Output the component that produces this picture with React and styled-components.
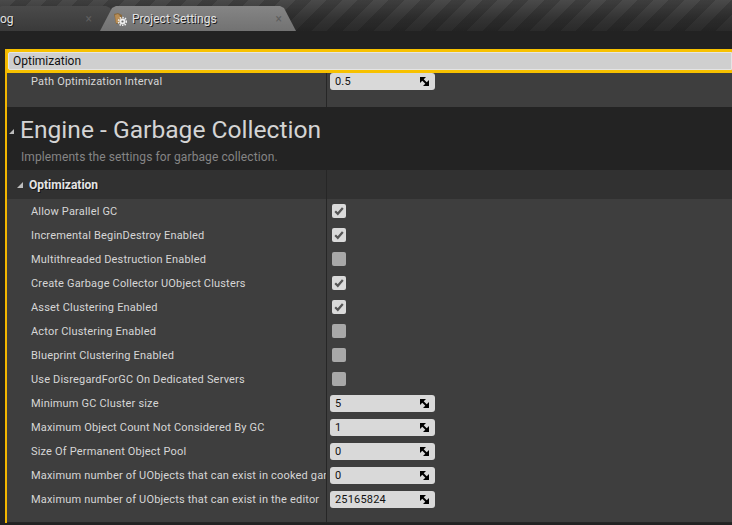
import React from "react";
import styled, { createGlobalStyle } from "styled-components";

const GlobalStyle = createGlobalStyle`
  html, body {
    margin: 0;
    padding: 0;
    background: #222222;
  }
  * {
    box-sizing: border-box;
  }
`;

// rows of the garbage collection category
const rows = [
  { name: "Allow Parallel GC", type: "bool", value: true },
  { name: "Incremental BeginDestroy Enabled", type: "bool", value: true },
  { name: "Multithreaded Destruction Enabled", type: "bool", value: false },
  { name: "Create Garbage Collector UObject Clusters", type: "bool", value: true },
  { name: "Asset Clustering Enabled", type: "bool", value: true },
  { name: "Actor Clustering Enabled", type: "bool", value: false },
  { name: "Blueprint Clustering Enabled", type: "bool", value: false },
  { name: "Use DisregardForGC On Dedicated Servers", type: "bool", value: false },
  { name: "Minimum GC Cluster size", type: "num", value: "5" },
  { name: "Maximum Object Count Not Considered By GC", type: "num", value: "1" },
  { name: "Size Of Permanent Object Pool", type: "num", value: "0" },
  { name: "Maximum number of UObjects that can exist in cooked game", type: "num", value: "0" },
  { name: "Maximum number of UObjects that can exist in the editor", type: "num", value: "25165824" },
];

const ResizeIcon = () => (
  <svg width="9" height="9" viewBox="0 0 9 9">
    <polygon points="0,0 6,0 0,6" fill="#000" />
    <polygon points="9,9 9,3 3,9" fill="#000" />
    <line x1="1" y1="1" x2="8" y2="8" stroke="#000" strokeWidth="2" />
  </svg>
);

const CheckIcon = () => (
  <svg width="10" height="10" viewBox="0 0 10 10">
    <path d="M1.2 5.2 L3.8 7.8 L8.8 2" fill="none" stroke="#555" strokeWidth="2.2" />
  </svg>
);

const SettingsIcon = () => (
  <svg width="14" height="14" viewBox="0 0 14 14">
    <path d="M1 2 L5 1 L9 3 L9 11 L3 12 Z" fill="#8a6a3e" />
    <path d="M2 3 L5 2 L7 4 L7 10 L3 11 Z" fill="#b88d55" />
    <circle cx="9.5" cy="9.5" r="3" fill="#eee" />
    <circle cx="9.5" cy="9.5" r="4" fill="none" stroke="#eee" strokeWidth="1.6" strokeDasharray="1.4 1.2" />
    <circle cx="9.5" cy="9.5" r="1.1" fill="#6a6a6a" />
  </svg>
);

const TriangleDown = ({ size }) => (
  <svg width={size} height={size} viewBox="0 0 6 6">
    <polygon points="6,0 6,6 0,6" fill="#bdbdbd" />
  </svg>
);

export default function App() {
  return (
    <>
      <GlobalStyle />
      <Screen>
        <TabBar>
          <LogTab>
            <TabLabel>og</TabLabel>
            <TabClose>×</TabClose>
          </LogTab>
          <ActiveTab>
            <SettingsIcon />
            <TabLabel>Project Settings</TabLabel>
            <TabClose>×</TabClose>
          </ActiveTab>
        </TabBar>

        <Body>
          <Panel>
            <SearchFrame>
              <SearchBox>Optimization</SearchBox>
            </SearchFrame>

            <PropertyRow $tall>
              <NameCell $tall>Path Optimization Interval</NameCell>
              <ValueCell $tall>
                <NumberBox>
                  <span>0.5</span>
                  <ResizeIcon />
                </NumberBox>
              </ValueCell>
            </PropertyRow>

            <SectionHeader>
              <SectionTitle>
                <TriangleDown size={5} />
                <span>Engine - Garbage Collection</span>
              </SectionTitle>
              <SectionDesc>Implements the settings for garbage collection.</SectionDesc>
            </SectionHeader>

            <CategoryRow>
              <CategoryName>
                <TriangleDown size={6} />
                <span>Optimization</span>
              </CategoryName>
              <ValueCell />
            </CategoryRow>

            {rows.map((row) => (
              <PropertyRow key={row.name}>
                <NameCell>{row.name}</NameCell>
                <ValueCell>
                  {row.type === "bool" ? (
                    <CheckBox $checked={row.value}>{row.value && <CheckIcon />}</CheckBox>
                  ) : (
                    <NumberBox>
                      <span>{row.value}</span>
                      <ResizeIcon />
                    </NumberBox>
                  )}
                </ValueCell>
              </PropertyRow>
            ))}
            <PanelFoot>
              <span />
              <ValueCell />
            </PanelFoot>
          </Panel>
        </Body>
      </Screen>
    </>
  );
}

const Screen = styled.div`
  width: 732px;
  height: 525px;
  overflow: hidden;
  background: #222222;
  font-family: Roboto, "Liberation Sans", sans-serif;
  display: flex;
  flex-direction: column;
`;

const TabBar = styled.div`
  height: 31px;
  flex-shrink: 0;
  display: flex;
  align-items: flex-end;
  background:
    repeating-linear-gradient(135deg, rgba(0, 0, 0, 0) 0 11px, rgba(0, 0, 0, 0.16) 11px 22px),
    linear-gradient(180deg, #4a4a4a 0%, #333333 60%, #2a2a2a 100%);
`;

const Tab = styled.div`
  height: 25px;
  flex-shrink: 0;
  display: flex;
  align-items: center;
  clip-path: polygon(0 100%, 12px 2px, 16px 0, calc(100% - 16px) 0, calc(100% - 12px) 2px, 100% 100%);
`;

const LogTab = styled(Tab)`
  width: 136px;
  margin-left: -14px;
  padding: 0 30px 0 14px;
  justify-content: space-between;
  background: linear-gradient(180deg, #4a4a4a, #3a3a3a);
`;

const ActiveTab = styled(Tab)`
  width: 196px;
  margin-left: -22px;
  padding: 0 14px 0 13px;
  gap: 5px;
  background: linear-gradient(180deg, #858585, #727272);
  z-index: 1;

  svg {
    flex-shrink: 0;
    margin-top: 1px;
  }
  > span:nth-of-type(1) {
    flex: 1;
  }
`;

const TabLabel = styled.span`
  font-size: 12px;
  color: #e2e2e2;
  text-shadow: 1px 1px 0 #1a1a1a;
  white-space: nowrap;
`;

const TabClose = styled.span`
  font-size: 12px;
  color: #5e5e5e;
`;

const Body = styled.div`
  flex: 1;
  padding: 18px 0 2px 5px;
  display: flex;
  min-height: 0;
`;

const Panel = styled.div`
  flex: 1;
  border-left: 2px solid #f2b600;
  background: #3e3e3e;
  display: flex;
  flex-direction: column;
  overflow: hidden;
`;

const SearchFrame = styled.div`
  background: #f7c100;
  padding: 3px 0 3px 1px;
`;

const SearchBox = styled.div`
  height: 18px;
  background: #cfcfcf;
  border: 1px solid #e4e4e4;
  border-radius: 2px 0 0 2px;
  padding-left: 4px;
  font-size: 12px;
  line-height: 16px;
  color: #111;
`;

const PropertyRow = styled.div`
  display: grid;
  grid-template-columns: 319px 1fr;
  height: ${(p) => (p.$tall ? "34px" : "24px")};
  background: #3e3e3e;
`;

const NameCell = styled.div`
  padding-left: 24px;
  padding-right: 2px;
  font-size: 11px;
  letter-spacing: 0.18px;
  color: #d6d6d6;
  white-space: nowrap;
  overflow: hidden;
  display: flex;
  align-items: ${(p) => (p.$tall ? "flex-start" : "center")};
  line-height: ${(p) => (p.$tall ? "17px" : "normal")};
`;

const ValueCell = styled.div`
  border-left: 1px solid #262626;
  padding-left: 3px;
  display: flex;
  align-items: ${(p) => (p.$tall ? "flex-start" : "center")};
`;

const NumberBox = styled.div`
  width: 105px;
  height: 17px;
  flex-shrink: 0;
  border-radius: 3px;
  background: #d9d9d9;
  display: flex;
  align-items: center;
  justify-content: space-between;
  padding: 0 6px 0 5px;
  font-size: 11px;
  letter-spacing: 0.18px;
  color: #111;
`;

const CheckBox = styled.div`
  width: 14px;
  height: 14px;
  margin-left: 2px;
  border-radius: 2px;
  background: ${(p) => (p.$checked ? "#dadada" : "#a8a8a8")};
  display: flex;
  align-items: center;
  justify-content: center;
`;

const SectionHeader = styled.div`
  height: 63px;
  background: #232323;
  padding: 9px 0 0 2px;
  display: flex;
  flex-direction: column;
`;

const SectionTitle = styled.div`
  display: flex;
  align-items: center;
  gap: 6px;
  font-size: 24.6px;
  line-height: 28px;
  color: #d4d4d4;

  svg {
    margin-top: 2px;
  }
`;

const SectionDesc = styled.div`
  margin-top: 6px;
  padding-left: 12px;
  font-size: 12px;
  letter-spacing: 0.1px;
  color: #858585;
`;

const CategoryRow = styled.div`
  display: grid;
  grid-template-columns: 319px 1fr;
  height: 29px;
  background: #313131;
`;

const CategoryName = styled.div`
  display: flex;
  align-items: center;
  gap: 6px;
  padding-left: 10px;
  font-size: 12px;
  font-weight: bold;
  color: #e4e4e4;
  text-shadow: 1px 1px 0 #111;
`;

const PanelFoot = styled.div`
  display: grid;
  grid-template-columns: 319px 1fr;
  flex: 1;
  border-bottom: 1px solid #262626;
`;
